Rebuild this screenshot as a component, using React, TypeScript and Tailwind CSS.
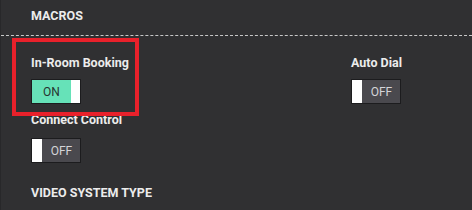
import { useState } from 'react';

function Toggle({ on, onClick }: { on: boolean; onClick: () => void }) {
  return (
    <button
      onClick={onClick}
      className="flex h-[25px] w-[50px] border border-[#1c1c1e] p-0 text-[12px] font-normal"
    >
      {on ? (
        <>
          <span className="flex h-full flex-1 items-center justify-center bg-[#66e2b8] text-[#26352f]">ON</span>
          <span className="h-full w-[9px] bg-white" />
        </>
      ) : (
        <>
          <span className="h-full w-[10px] bg-white" />
          <span className="flex h-full flex-1 items-center justify-center bg-[#4a494e] pl-[1px] text-[#d4d4d8]">OFF</span>
        </>
      )}
    </button>
  );
}

export default function App() {
  const [booking, setBooking] = useState(true);
  const [autoDial, setAutoDial] = useState(false);
  const [connect, setConnect] = useState(false);

  return (
    <div
      className="relative h-[210px] w-[472px] overflow-hidden border-l border-[#28282a] bg-[#303032] text-[12.5px] font-bold leading-4 text-[#ececec]"
      style={{ fontFamily: 'Roboto, "Liberation Sans", sans-serif' }}
    >
      <div className="h-[36px] border-b border-dashed border-[#c8c8c8] pl-[30px] pt-[8px]">MACROS</div>

      <div className="grid grid-cols-[320px_1fr] pl-[30px] pt-[19px]">
        <div>
          <div>In-Room Booking</div>
          <div className="mt-[8px]">
            <Toggle on={booking} onClick={() => setBooking(!booking)} />
          </div>
        </div>
        <div>
          <div>Auto Dial</div>
          <div className="mt-[8px]">
            <Toggle on={autoDial} onClick={() => setAutoDial(!autoDial)} />
          </div>
        </div>
      </div>

      <div className="pl-[30px] pt-[8px]">
        <div>Connect Control</div>
        <div className="mt-[10px]">
          <Toggle on={connect} onClick={() => setConnect(!connect)} />
        </div>
        <div className="mt-[22px]">VIDEO SYSTEM TYPE</div>
      </div>

      {/* highlight annotation */}
      <div className="pointer-events-none absolute left-[11px] top-[38px] h-[78px] w-[127px] border-4 border-[#e8212b]" />
    </div>
  );
}
